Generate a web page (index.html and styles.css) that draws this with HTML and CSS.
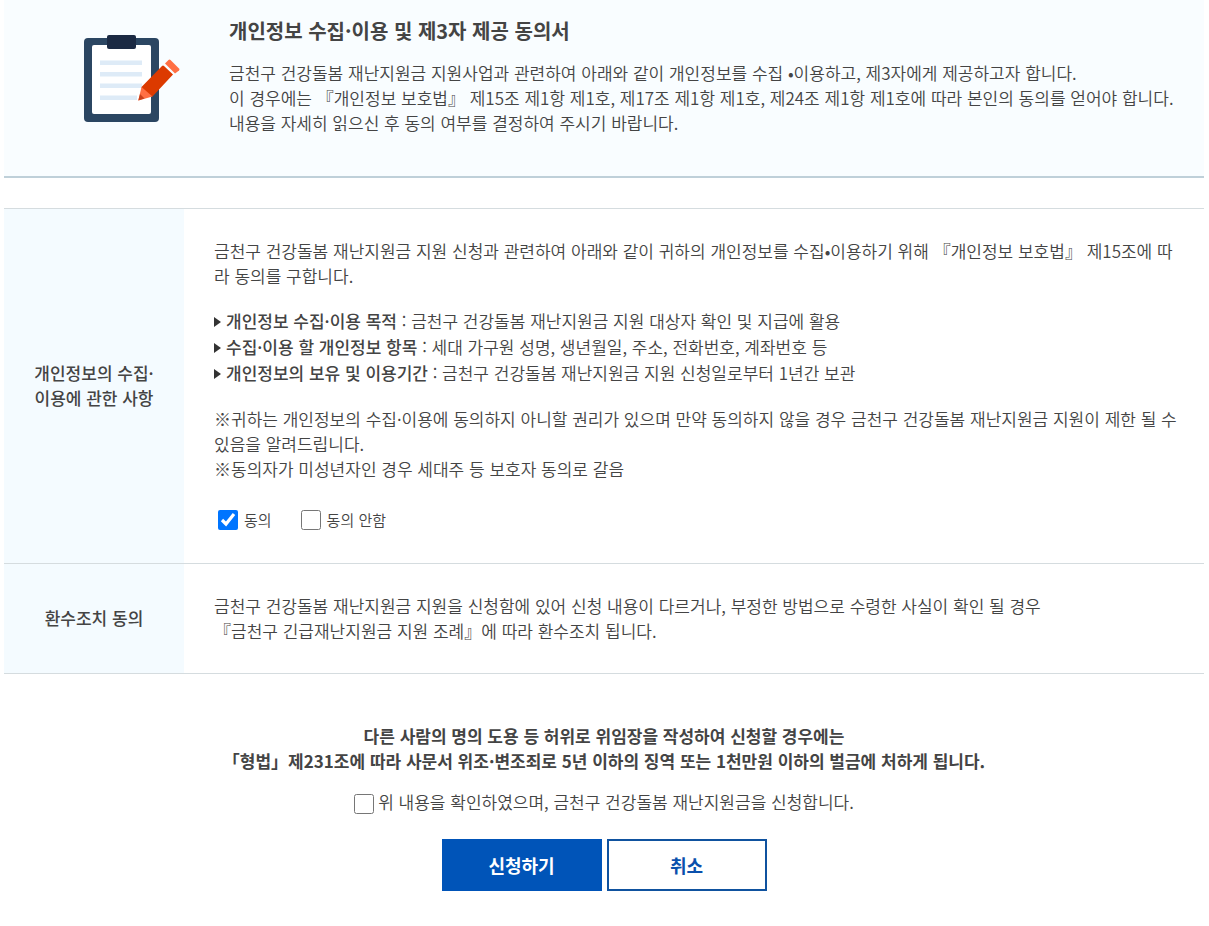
FILE: index.html
```html
<!DOCTYPE html>
<html lang="ko">
<head>
    <meta charset="UTF-8">
    <meta name="viewport" content="width=device-width, initial-scale=1.0">
    <title>개인정보 수집·이용 및 제3자 제공 동의서</title>
    <link rel="stylesheet" href="styles.css">
</head>
<body>
    <form class="container">
        <div class="intro">
            <div class="intro-icon">
                <svg width="96" height="88" viewBox="0 0 96 88" aria-hidden="true">
                    <rect x="0" y="3" width="75" height="84" rx="4" fill="#2b4662"/>
                    <rect x="8" y="10" width="59" height="69" rx="2" fill="#fff"/>
                    <rect x="23" y="0" width="29" height="14" rx="2" fill="#1b2a43"/>
                    <path d="M16 25.500h42v4.500H16zM16 37h42v4.500H16zM16 48.500h42v4.500H16zM16 60.500h37v4.500H16z" fill="#deebf7"/>
                    <path d="M57.500 52 78 31q1-1 2 0l9 8.500L68.500 61.500 60 60z" fill="#dc3a00"/>
                    <path d="M57.500 52 68.500 61.500 54.300 65.500z" fill="#ff6f43"/>
                    <path d="M56 59 54.300 65.500 60.500 63.500z" fill="#c9401a"/>
                    <path d="M81 28.500 84.500 25q1-1 2 0l8.500 8.500q1 1 0 2L91 38.500z" fill="#ff6f43"/>
                </svg>
            </div>
            <div class="intro-text">
                <h1>개인정보 수집·이용 및 제3자 제공 동의서</h1>
                <p>금천구 건강돌봄 재난지원금 지원사업과 관련하여 아래와 같이 개인정보를 수집 •이용하고, 제3자에게 제공하고자 합니다.<br>
                이 경우에는 『개인정보 보호법』 제15조 제1항 제1호, 제17조 제1항 제1호, 제24조 제1항 제1호에 따라 본인의 동의를 얻어야 합니다.<br>
                내용을 자세히 읽으신 후 동의 여부를 결정하여 주시기 바랍니다.</p>
            </div>
        </div>

        <table class="agree-table">
            <tbody>
                <tr>
                    <th scope="row">개인정보의 수집·<br>이용에 관한 사항</th>
                    <td>
                        <p>금천구 건강돌봄 재난지원금 지원 신청과 관련하여 아래와 같이 귀하의 개인정보를 수집•이용하기 위해 『개인정보 보호법』 제15조에 따라 동의를 구합니다.</p>
                        <ul class="item-list">
                            <li><strong>개인정보 수집·이용 목적</strong> : 금천구 건강돌봄 재난지원금 지원 대상자 확인 및 지급에 활용</li>
                            <li><strong>수집·이용 할 개인정보 항목</strong> : 세대 가구원 성명, 생년월일, 주소, 전화번호, 계좌번호 등</li>
                            <li><strong>개인정보의 보유 및 이용기간</strong> : 금천구 건강돌봄 재난지원금 지원 신청일로부터 1년간 보관</li>
                        </ul>
                        <p>※귀하는 개인정보의 수집·이용에 동의하지 아니할 권리가 있으며 만약 동의하지 않을 경우 금천구 건강돌봄 재난지원금 지원이 제한 될 수 있음을 알려드립니다.<br>
                        ※동의자가 미성년자인 경우 세대주 등 보호자 동의로 갈음</p>
                        <div class="choice">
                            <label for="agreeY"><input type="checkbox" id="agreeY" checked>동의</label>
                            <label for="agreeN"><input type="checkbox" id="agreeN">동의 안함</label>
                        </div>
                    </td>
                </tr>
                <tr>
                    <th scope="row">환수조치 동의</th>
                    <td>
                        <p>금천구 건강돌봄 재난지원금 지원을 신청함에 있어 신청 내용이 다르거나, 부정한 방법으로 수령한 사실이 확인 될 경우<br>
                        『금천구 긴급재난지원금 지원 조례』에 따라 환수조치 됩니다.</p>
                    </td>
                </tr>
            </tbody>
        </table>

        <div class="confirm">
            <p class="warning">다른 사람의 명의 도용 등 허위로 위임장을 작성하여 신청할 경우에는<br>
            「형법」제231조에 따라 사문서 위조·변조죄로 5년 이하의 징역 또는 1천만원 이하의 벌금에 처하게 됩니다.</p>
            <label class="confirm-check" for="confirmAll"><input type="checkbox" id="confirmAll">위 내용을 확인하였으며, 금천구 건강돌봄 재난지원금을 신청합니다.</label>
            <div class="buttons">
                <button type="submit" class="btn btn-apply">신청하기</button>
                <button type="button" class="btn btn-cancel">취소</button>
            </div>
        </div>
    </form>
</body>
</html>
```
FILE: styles.css
```css
* {
    box-sizing: border-box;
}
body {
    margin: 0;
    padding: 0 5px 0 4px;
    background: #fff;
    color: #444;
    font-family: "Noto Sans CJK KR", "Noto Sans KR", sans-serif;
    font-size: 17px;
    font-weight: 350;
    line-height: 25px;
}
h1, p, ul {
    margin: 0;
    padding: 0;
}
.container {
    max-width: 1200px;
    margin: 0 auto;
}

/* 상단 안내 */
.intro {
    display: flex;
    padding: 16px 30px 41px 80px;
    background: #f9fdff;
    border-bottom: 2px solid #bfd0d9;
}
.intro-icon {
    flex: none;
    width: 145px;
    padding-top: 19px;
}
.intro-icon svg {
    display: block;
}
.intro h1 {
    margin-bottom: 14px;
    font-size: 20px;
    font-weight: 700;
    line-height: 30px;
}

/* 동의 항목 */
.agree-table {
    width: 100%;
    margin-top: 30px;
    border-collapse: collapse;
    border-top: 1px solid #d5dcdf;
}
.agree-table tr {
    border-bottom: 1px solid #d5dcdf;
}
.agree-table th {
    width: 180px;
    padding: 0 0 2px;
    background: #f4fbff;
    font-weight: 500;
    text-align: center;
}
.agree-table td {
    padding: 29px 26px 30px 30px;
}
.item-list {
    margin: 20px 0;
    list-style: none;
    line-height: 26px;
}
.item-list li::before {
    content: "";
    display: inline-block;
    margin-right: 5px;
    border-left: 7px solid #333;
    border-top: 5px solid transparent;
    border-bottom: 5px solid transparent;
    vertical-align: 1px;
}
.item-list strong {
    font-weight: 500;
}
input[type="checkbox"] {
    flex: none;
    width: 20px;
    height: 20px;
    margin: 0;
}
.choice {
    display: flex;
    gap: 29px;
    margin-top: 26px;
    padding: 0 0 1px 4px;
    font-size: 15px;
}
.choice label {
    display: flex;
    align-items: center;
    gap: 6px;
}

/* 신청 확인 */
.confirm {
    display: flex;
    flex-direction: column;
    align-items: center;
    padding-top: 49px;
    text-align: center;
}
.warning {
    font-weight: 700;
}
.confirm-check {
    display: flex;
    align-items: flex-end;
    gap: 4px;
    margin: 16px 0 25px;
}
.buttons {
    display: flex;
    gap: 5px;
}
.btn {
    width: 160px;
    height: 52px;
    padding: 0;
    border: 2px solid #0054b8;
    font-family: inherit;
    font-size: 18px;
    font-weight: 700;
    cursor: pointer;
}
.btn-apply {
    background: #0054b8;
    color: #fff;
}
.btn-cancel {
    background: #fff;
    border-color: #0f529f;
    color: #0a50ac;
}
```
